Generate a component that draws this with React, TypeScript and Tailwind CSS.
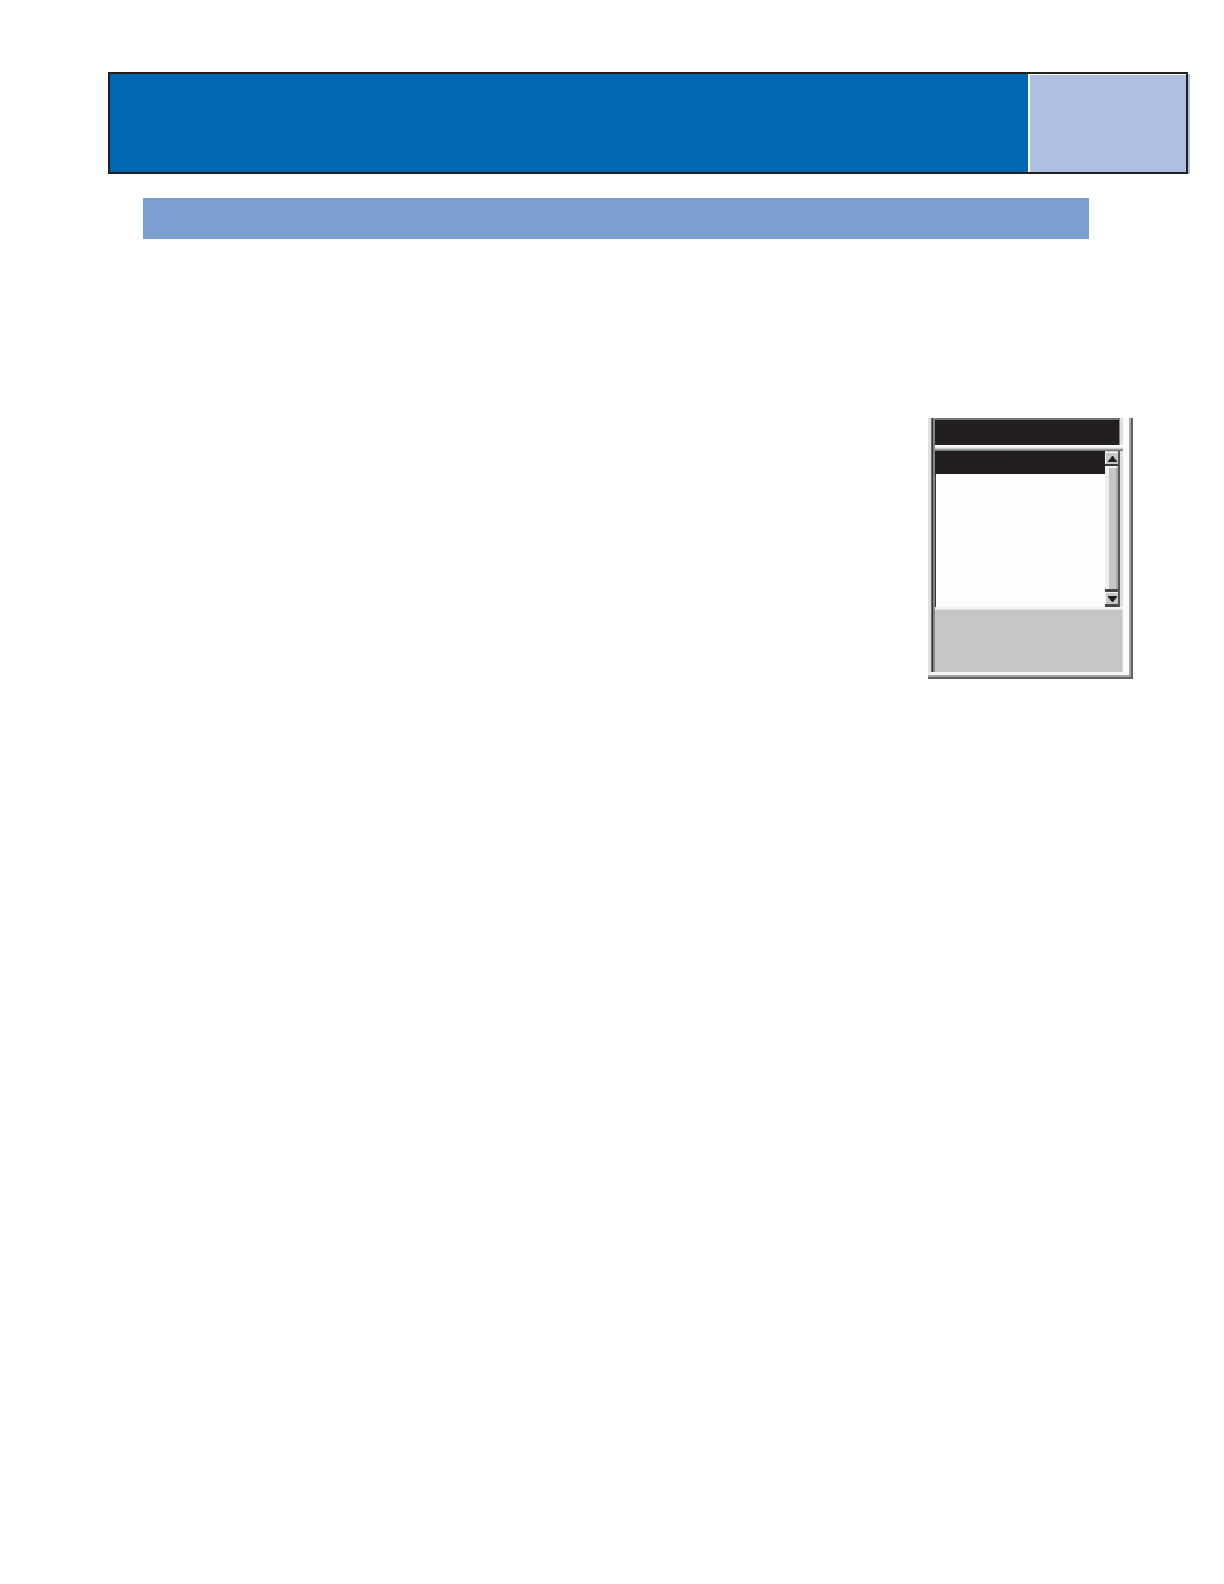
function ScrollButton({ direction }: { direction: 'up' | 'down' }) {
  return (
    <button
      type="button"
      aria-label={direction === 'up' ? 'Scroll up' : 'Scroll down'}
      className="flex h-3 w-full shrink-0 items-center justify-end border-t border-l border-[#f4f4f4] bg-[#c6c7c8]"
    >
      <svg viewBox="0 0 10 8" className="h-2 w-[10px]" fill="#1f1f20" aria-hidden="true">
        {direction === 'up' ? <path d="M4 1 H5 L7 4 L9 6 V7 H0 V6 L2 4 Z" /> : <path d="M0 1 H9 V2 L5 7 H4 L0 2 Z" />}
      </svg>
    </button>
  );
}

function ScrollBar() {
  return (
    <div className="flex w-[15px] shrink-0 flex-col border-r-2 border-[#555657] bg-[#555657]">
      <div className="h-px shrink-0 bg-[#d8d8d8]" />
      <ScrollButton direction="up" />
      <div className="h-[2px] shrink-0 bg-[#38383a]" />
      <div className="flex-1 border-t-2 border-r-2 border-l-4 border-t-[#f5f5f5] border-r-[#aaaaab] border-l-[#eeeeee] bg-[#c5c6c8]" />
      <div className="h-[3px] shrink-0 bg-[#454647]" />
      <ScrollButton direction="down" />
      <div className="h-[3px] shrink-0 bg-[#454647]" />
    </div>
  );
}

function ListWindow() {
  return (
    <section aria-label="List window" className="w-[205px] border-r-2 border-b-2 border-[#606163]">
      <div className="border-r-2 border-b-2 border-[#a3a4a6]">
        <div className="flex border-r-[6px] border-b-[3px] border-l-[3px] border-r-[#fbfbfb] border-b-[#f6f6f6] border-l-[#e0e0df]">
          <div className="w-1 shrink-0 border-r-2 border-l border-r-[#858687] border-l-[#707172] bg-[#333334]" />
          <div className="min-w-0 flex-1">
            <div className="flex">
              <div className="h-[27px] flex-1 border-t-2 border-r border-t-[#747576] border-r-[#858687] bg-[#231f20]" />
              <div className="w-[3px] bg-[#dedfdf]" />
            </div>
            <div className="h-[6px] bg-linear-to-b from-[#ffffff] from-30% via-[#c9caca] via-60% to-[#5c5d5e]" />
            <div className="flex h-[156px]">
              <div className="flex flex-1 flex-col bg-[#fdfdfd]">
                <div className="h-[23px] bg-[#231f20]" />
                <ul aria-label="Items" className="flex-1 border-l border-[#363637]" />
              </div>
              <ScrollBar />
              <div className="w-[3px] bg-[#dedfdf]" />
            </div>
            <div className="h-[3px] border-b border-[#dedfdf] bg-[#f4f4f4]" />
            <div className="h-[62px] border-r border-[#d8d8d8] bg-[#c5c6c8]" />
          </div>
        </div>
      </div>
    </section>
  );
}

export default function App() {
  return (
    <main className="min-h-screen bg-white pt-[72px] pr-9 pl-[108px]">
      <header className="flex h-[102px] border-2 border-[#231f20] bg-[#0067b1] shadow-[3px_1px_0_-1px_#adc0e1]">
        <div className="flex-1" />
        <div className="w-[158px] border-t border-l-2 border-white bg-[#adc0e1]" />
      </header>
      <div className="mt-6 mr-[99px] ml-[35px] h-[41px] bg-[#7d9fd0]" />
      <div className="mt-[179px] mr-[55px] flex justify-end">
        <ListWindow />
      </div>
    </main>
  );
}
